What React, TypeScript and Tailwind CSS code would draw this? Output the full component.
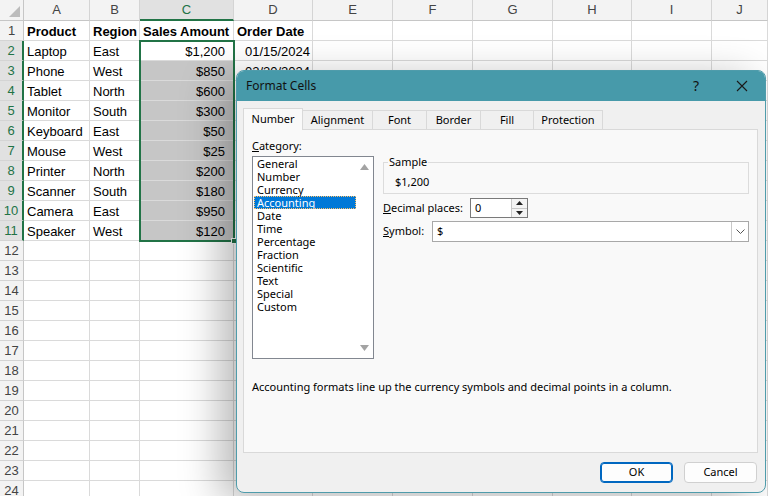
import { Fragment } from 'react';

const colWidths = ['A', 'B', 'C', 'D', 'E', 'F', 'G', 'H', 'I', 'J'];

const data: string[][] = [
  ['Product', 'Region', 'Sales Amount', 'Order Date'],
  ['Laptop', 'East', '$1,200', '01/15/2024'],
  ['Phone', 'West', '$850', '02/20/2024'],
  ['Tablet', 'North', '$600', '03/10/2024'],
  ['Monitor', 'South', '$300', '04/05/2024'],
  ['Keyboard', 'East', '$50', '05/12/2024'],
  ['Mouse', 'West', '$25', '06/18/2024'],
  ['Printer', 'North', '$200', '07/22/2024'],
  ['Scanner', 'South', '$180', '08/30/2024'],
  ['Camera', 'East', '$950', '09/14/2024'],
  ['Speaker', 'West', '$120', '10/01/2024'],
];

const categories = [
  'General',
  'Number',
  'Currency',
  'Accounting',
  'Date',
  'Time',
  'Percentage',
  'Fraction',
  'Scientific',
  'Text',
  'Special',
  'Custom',
];

const tabs = [
  { label: 'Number', w: 'w-[60px]' },
  { label: 'Alignment', w: 'w-[70px]' },
  { label: 'Font', w: 'w-[54px]' },
  { label: 'Border', w: 'w-[54px]' },
  { label: 'Fill', w: 'w-[53px]' },
  { label: 'Protection', w: 'w-[69px]' },
];

function Sheet() {
  const rowNums = Array.from({ length: 24 }, (_, i) => i + 1);

  return (
    <div className="relative grid grid-cols-[24px_66px_50px_94px_79px_80px_80px_80px_79px_80px_1fr] font-['Liberation_Sans',Arial,sans-serif] text-[13px] text-black">
      {/* Column headers */}
      <div className="relative h-[21px] border-r border-b border-[#c6c6c6] bg-[#f3f3f3]">
        <div className="absolute right-[3px] bottom-[3px] h-0 w-0 border-t-[11px] border-r-[11px] border-t-transparent border-r-[#bcbcbc]" />
      </div>
      {colWidths.map((c) => (
        <div
          key={c}
          className={`flex h-[21px] items-center justify-center border-r border-[#d4d4d4] ${
            c === 'C'
              ? 'border-b-2 border-b-[#217346] bg-[#e1e1e1] text-[#217346]'
              : 'border-b border-b-[#c6c6c6] bg-[#f3f3f3] text-[#444]'
          }`}
        >
          {c}
        </div>
      ))}

      {rowNums.map((n) => {
        const row = data[n - 1];
        const sel = n >= 2 && n <= 11;
        return (
          <Fragment key={n}>
            <div
              className={`flex h-[20px] items-center justify-center border-b border-[#d4d4d4] pt-[1px] ${
                sel
                  ? 'border-r-2 border-r-[#217346] bg-[#e1e1e1] text-[#217346]'
                  : 'border-r border-r-[#c6c6c6] bg-[#f3f3f3] text-[#444]'
              }`}
            >
              {n}
            </div>
            {colWidths.map((c, ci) => {
              const val = row && ci < 4 ? row[ci] : '';
              const bold = n === 1;
              const right = !bold && (ci === 2 || ci === 3);
              const shaded = ci === 2 && n >= 3 && n <= 11;
              return (
                <div
                  key={c}
                  className={`flex h-[20px] items-center overflow-hidden whitespace-nowrap border-r border-b border-[#dadada] pt-[2px] ${
                    shaded ? 'bg-[#c6c6c6]' : 'bg-white'
                  } ${bold ? 'font-bold' : ''} ${
                    right ? (ci === 2 ? 'justify-end pr-[8px]' : 'justify-end pr-[2px]') : 'pl-[3px]'
                  }`}
                >
                  {val}
                </div>
              );
            })}
          </Fragment>
        );
      })}

      {/* selection outline */}
      <div className="pointer-events-none absolute left-[139px] top-[40px] h-[202px] w-[96px] border-2 border-[#217346]" />
      <div className="pointer-events-none absolute left-[231px] top-[238px] h-[6px] w-[6px] border border-white bg-[#217346]" />
    </div>
  );
}

function FormatCellsDialog() {
  return (
    <div className="absolute left-[236px] top-[70px] flex h-[423px] w-[530px] flex-col overflow-hidden rounded-[8px] border border-[#4f9cab] bg-[#f0f0f0] font-['Noto_Sans','Liberation_Sans',sans-serif] text-[11px] text-black shadow-[-16px_8px_40px_rgba(0,0,0,0.28)]">
      {/* Title bar */}
      <div className="flex h-[30px] shrink-0 items-center bg-[#479aaa] pl-[9px] text-[12px] text-[#111]">
        <span>Format Cells</span>
        <span className="ml-auto mr-[37px] text-[14px] leading-none">?</span>
        <svg width="12" height="12" viewBox="0 0 12 12" className="mr-[17px]">
          <path d="M1 1 L11 11 M11 1 L1 11" stroke="#1a1a1a" strokeWidth="1.1" fill="none" />
        </svg>
      </div>

      <div className="px-[6px] pt-[7px]">
        {/* Tabs */}
        <div className="flex h-[21px] items-end">
          {tabs.map((t, i) =>
            i === 0 ? (
              <div
                key={t.label}
                className={`relative z-10 -mb-px flex h-[22px] ${t.w} items-center justify-center border border-b-0 border-[#d9d9d9] bg-[#f9f9f9]`}
              >
                {t.label}
              </div>
            ) : (
              <div
                key={t.label}
                className={`flex h-[19px] ${t.w} items-center justify-center border border-b-0 border-l-0 border-[#d9d9d9] bg-[#f0f0f0]`}
              >
                {t.label}
              </div>
            )
          )}
        </div>

        {/* Panel */}
        <div className="h-[324px] w-[515px] border border-[#d9d9d9] bg-[#f9f9f9] px-[8px] pt-[8px]">
          <div className="flex">
            <div className="w-[122px]">
              <div className="h-[15px] leading-[15px]">
                <span className="underline">C</span>ategory:
              </div>
              <div className="mt-[3px] flex h-[203px] border border-[#828790] bg-white">
                <div className="flex-1 pl-px">
                  {categories.map((c) => (
                    <div
                      key={c}
                      className={`h-[13px] pl-[3px] leading-[13px] ${
                        c === 'Accounting'
                          ? 'bg-[#0078d7] text-white outline-1 outline-dotted outline-offset-[-1px] outline-[#ffbf66]'
                          : ''
                      }`}
                    >
                      {c}
                    </div>
                  ))}
                </div>
                <div className="flex w-[17px] flex-col items-center justify-between py-[7px]">
                  <svg width="9" height="6" viewBox="0 0 9 6">
                    <path d="M4.5 0 L9 6 L0 6 Z" fill="#a3a3a3" />
                  </svg>
                  <svg width="9" height="6" viewBox="0 0 9 6">
                    <path d="M0 0 L9 0 L4.5 6 Z" fill="#a3a3a3" />
                  </svg>
                </div>
              </div>
            </div>

            <div className="ml-[9px] w-[366px] pt-[17px]">
              <fieldset className="h-[39px] border border-[#dcdcdc] pl-[4px]">
                <legend className="px-px leading-[14px]">Sample</legend>
                <div className="pl-[7px] pt-[6px] leading-[14px]">$1,200</div>
              </fieldset>

              <div className="mt-[4px] flex h-[20px] items-center">
                <span className="w-[87px]">
                  <span className="underline">D</span>ecimal places:
                </span>
                <div className="flex h-[20px] w-[58px] border border-[#7a7a7a] bg-white">
                  <div className="flex flex-1 items-center pl-[4px]">0</div>
                  <div className="flex w-[16px] flex-col border-l border-[#c8c8c8]">
                    <div className="flex flex-1 items-center justify-center border-b border-[#c8c8c8] bg-[#f4f4f4]">
                      <svg width="7" height="4" viewBox="0 0 7 4">
                        <path d="M3.5 0 L7 4 L0 4 Z" fill="#222" />
                      </svg>
                    </div>
                    <div className="flex flex-1 items-center justify-center bg-[#f4f4f4]">
                      <svg width="7" height="4" viewBox="0 0 7 4">
                        <path d="M0 0 L7 0 L3.5 4 Z" fill="#222" />
                      </svg>
                    </div>
                  </div>
                </div>
              </div>

              <div className="mt-[3px] flex h-[21px] items-center">
                <span className="w-[49px]">
                  <span className="underline">S</span>ymbol:
                </span>
                <div className="flex h-[21px] w-[317px] border border-[#a8a8a8] bg-white">
                  <div className="flex flex-1 items-center pl-[4px]">$</div>
                  <div className="flex w-[17px] items-center justify-center border-l border-[#c8c8c8]">
                    <svg width="9" height="6" viewBox="0 0 9 6">
                      <path d="M0.5 0.5 L4.5 4.5 L8.5 0.5" stroke="#555" strokeWidth="1" fill="none" />
                    </svg>
                  </div>
                </div>
              </div>
            </div>
          </div>

          <p className="mt-[21px] leading-[14px]">
            Accounting formats line up the currency symbols and decimal points in a column.
          </p>
        </div>
      </div>

      {/* Buttons */}
      <div className="mt-[9px] flex justify-end gap-[11px] pr-[8px]">
        <button className="h-[21px] w-[73px] rounded-[4px] border border-[#0067c0] bg-[#fdfdfd] text-[11px] shadow-[inset_0_0_0_1px_#0067c0]">
          OK
        </button>
        <button className="h-[21px] w-[73px] rounded-[4px] border border-[#d0d0d0] bg-[#fdfdfd] text-[11px]">
          Cancel
        </button>
      </div>
    </div>
  );
}

export default function App() {
  return (
    <div className="relative h-[496px] w-[768px] overflow-hidden bg-white">
      <Sheet />
      <FormatCellsDialog />
    </div>
  );
}
